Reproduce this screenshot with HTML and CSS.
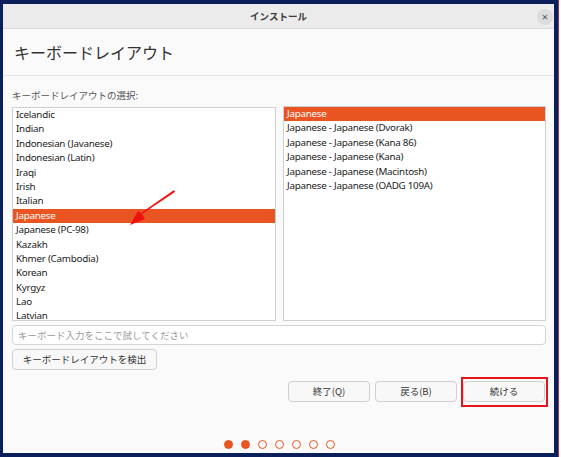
FILE: index.html
```html
<!DOCTYPE html>
<html lang="ja">
<head>
<meta charset="utf-8">
<link rel="stylesheet" href="styles.css">
</head>
<body>
<div class="frame">
  <div class="titlebar">
    <span class="title">インストール</span>
    <span class="close">×</span>
  </div>
  <div class="heading">キーボードレイアウト</div>
  <div class="main">
    <div class="label">キーボードレイアウトの選択:</div>
    <div class="lists">
      <div class="list left">
        <div class="row">Icelandic</div>
        <div class="row">Indian</div>
        <div class="row">Indonesian (Javanese)</div>
        <div class="row">Indonesian (Latin)</div>
        <div class="row">Iraqi</div>
        <div class="row">Irish</div>
        <div class="row">Italian</div>
        <div class="row sel">Japanese</div>
        <div class="row">Japanese (PC-98)</div>
        <div class="row">Kazakh</div>
        <div class="row">Khmer (Cambodia)</div>
        <div class="row">Korean</div>
        <div class="row">Kyrgyz</div>
        <div class="row">Lao</div>
        <div class="row">Latvian</div>
      </div>
      <div class="list right">
        <div class="row sel">Japanese</div>
        <div class="row">Japanese - Japanese (Dvorak)</div>
        <div class="row">Japanese - Japanese (Kana 86)</div>
        <div class="row">Japanese - Japanese (Kana)</div>
        <div class="row">Japanese - Japanese (Macintosh)</div>
        <div class="row">Japanese - Japanese (OADG 109A)</div>
      </div>
    </div>
    <div class="entry">キーボード入力をここで試してください</div>
    <div class="detect">キーボードレイアウトを検出</div>
    <div class="actions">
      <div class="btn">終了(Q)</div>
      <div class="btn">戻る(B)</div>
      <div class="btn">続ける</div>
    </div>
    <div class="dots">
      <span class="dot on"></span><span class="dot on"></span><span class="dot"></span><span class="dot"></span><span class="dot"></span><span class="dot"></span><span class="dot"></span>
    </div>
  </div>
  <div class="redbox"></div>
  <svg class="arrow" width="60" height="40" viewBox="0 0 60 40">
    <polygon points="46,2 47,4 14,26 17,31 2,37 10,23 13,25" fill="#f01010"/>
  </svg>
</div>
</body>
</html>
```

FILE: styles.css
```css
html, body {
  margin: 0;
  padding: 0;
  background: #ffffff;
}
body {
  font-family: "Noto Sans", "Noto Sans CJK JP", sans-serif;
  font-size: 9.5px;
  color: #333;
}
.frame {
  position: relative;
  width: 551px;
  height: 449px;
  border-style: solid;
  border-color: #0b1f5c;
  border-width: 4px 4px 4px 3px;
  background: #fafafa;
  box-shadow: 1px 0 0 #a0303a;
  display: flex;
  flex-direction: column;
}
.titlebar {
  height: 24px;
  border-bottom: 1px solid #d8d8d8;
  background: #ebebeb;
  display: flex;
  align-items: center;
  justify-content: center;
  position: relative;
}
.title {
  font-family: "Noto Sans CJK JP", sans-serif;
  font-weight: bold;
  font-size: 9.5px;
  color: #3c3c3c;
}
.close {
  position: absolute;
  right: 1px;
  top: 5px;
  width: 16px;
  height: 16px;
  border-radius: 50%;
  background: #dcdcdc;
  color: #555;
  font-size: 11px;
  line-height: 15px;
  text-align: center;
}
.heading {
  height: 47px;
  box-sizing: border-box;
  border-bottom: 1px solid #e2e2e2;
  padding-left: 11px;
  display: flex;
  align-items: center;
  font-family: "Noto Sans CJK JP", sans-serif;
  font-size: 16px;
  color: #333;
}
.main {
  flex: 1;
  padding: 0 8px 0 9px;
  display: flex;
  flex-direction: column;
}
.label {
  margin-top: 13px;
  height: 12px;
  line-height: 12px;
  color: #555;
  font-family: "Noto Sans CJK JP", sans-serif;
  font-size: 9.5px;
}
.lists {
  margin-top: 6px;
  display: flex;
  gap: 7px;
  height: 214px;
}
.list {
  box-sizing: border-box;
  border: 1px solid #d0d0d0;
  background: #fff;
  height: 214px;
  overflow: hidden;
}
.list.left { width: 264px; }
.list.right { width: 263px; height: 215px; margin-top: -1px; }
.row {
  height: 14.4px;
  line-height: 14.4px;
  padding-left: 3px;
  white-space: nowrap;
  color: #222;
  font-size: 9.8px;
  letter-spacing: -0.25px;
}
.row.sel {
  background: #e95420;
  color: #fff;
}
.entry {
  margin-top: 4px;
  height: 20px;
  box-sizing: border-box;
  border: 1px solid #d4d4d4;
  border-radius: 4px;
  background: #fff;
  padding-left: 5px;
  line-height: 18px;
  color: #9a9a9a;
  font-family: "Noto Sans CJK JP", sans-serif;
  font-size: 9.5px;
}
.detect {
  margin-top: 4px;
  width: 145px;
  height: 21px;
  box-sizing: border-box;
  border: 1px solid #d0d0d0;
  border-radius: 4px;
  background: #f8f8f8;
  text-align: center;
  line-height: 19px;
  color: #333;
  font-family: "Noto Sans CJK JP", sans-serif;
  font-size: 9.5px;
}
.actions {
  margin-top: 11px;
  display: flex;
  justify-content: flex-end;
  gap: 5px;
  padding-right: 1px;
}
.btn {
  width: 82px;
  height: 21px;
  box-sizing: border-box;
  border: 1px solid #cfcfcf;
  border-radius: 4px;
  background: #f8f8f8;
  text-align: center;
  line-height: 19px;
  color: #333;
  font-family: "Noto Sans CJK JP", sans-serif;
  font-size: 9.5px;
}
.btn:last-child { margin-left: 1px; }
.dots {
  margin-top: 38px;
  display: flex;
  justify-content: center;
  gap: 8px;
  padding-left: 0;
  padding-right: 0;
}
.dot {
  width: 9px;
  height: 9px;
  box-sizing: border-box;
  border-radius: 50%;
  border: 1px solid #e95420;
}
.dot.on { background: #e95420; }
.redbox {
  position: absolute;
  left: 458px;
  top: 373px;
  width: 83px;
  height: 26px;
  border: 2px solid #e8141c;
}
.arrow {
  position: absolute;
  left: 125px;
  top: 184px;
}
```
